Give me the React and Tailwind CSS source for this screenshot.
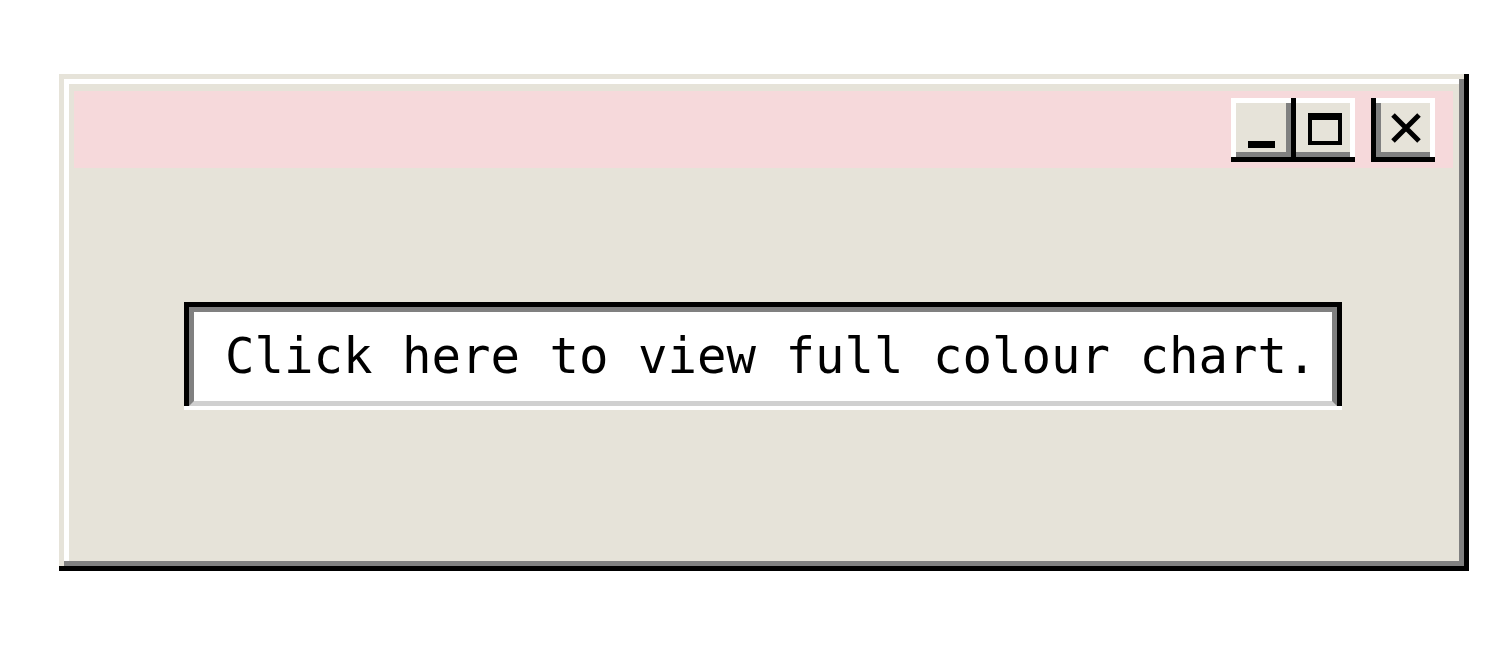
import React from "react";

export default function App() {
  return (
    <div className="min-h-[650px] w-[1500px] bg-white pt-[74px] pl-[59px]">
      {/* window: black(r,b) > beige(t,l) > gray(r,b) > white(t,l) */}
      <div className="w-[1410px] border-r-[5px] border-b-[5px] border-black">
        <div className="border-t-[5px] border-l-[5px] border-[#e6e3d9]">
          <div className="border-r-[5px] border-b-[5px] border-[#808080]">
            <div className="h-[482px] border-t-[5px] border-l-[5px] border-white bg-[#e6e3d9] flex flex-col">
              <div className="flex-1 pt-[7px] pl-[5px] pr-[6px] flex flex-col">
                {/* title bar */}
                <div className="h-[77px] bg-[#f6d9db] flex justify-end items-start pt-[7px] pr-[18px]">
                  {/* minimize */}
                  <div className="border-r-[5px] border-b-[5px] border-black">
                    <div className="border-t-[5px] border-l-[5px] border-white">
                      <div className="w-[55px] h-[54px] border-r-[5px] border-b-[5px] border-[#808080] bg-[#e6e3d9] flex items-end justify-center pb-[4px]">
                        <div className="w-[27px] h-[7px] bg-black" />
                      </div>
                    </div>
                  </div>
                  {/* maximize */}
                  <div className="border-b-[5px] border-black">
                    <div className="border-t-[5px] border-r-[5px] border-white">
                      <div className="w-[54px] h-[54px] border-b-[5px] border-[#808080] bg-[#e6e3d9] pt-[10px] pl-[12px]">
                        <div className="w-[34px] h-[32px] border-t-[7px] border-x-[4px] border-b-[4px] border-black" />
                      </div>
                    </div>
                  </div>
                  <div className="w-[16px]" />
                  {/* close */}
                  <div className="border-l-[5px] border-b-[5px] border-black">
                    <div className="border-t-[5px] border-r-[5px] border-white">
                      <div className="w-[54px] h-[54px] border-l-[5px] border-b-[5px] border-[#808080] bg-[#e6e3d9] flex items-center justify-center">
                        <svg width="30" height="30" viewBox="0 0 30 30">
                          <path d="M2 2 L28 28 M28 2 L2 28" stroke="black" strokeWidth="5" fill="none" />
                        </svg>
                      </div>
                    </div>
                  </div>
                </div>
                {/* text box */}
                <div className="mt-[134px] ml-[110px] w-[1158px] border-b-[4px] border-white">
                  <div className="border-t-[5px] border-x-[5px] border-black">
                    <div className="h-[99px] border-t-[5px] border-x-[5px] border-b-[5px] border-t-[#808080] border-x-[#808080] border-b-[#d0d0d0] bg-white flex items-center pl-[31px]">
                      <span
                        className="text-[49px] text-black whitespace-nowrap leading-none"
                        style={{ fontFamily: '"DejaVu Sans Mono", "Liberation Mono", monospace' }}
                      >
                        Click here to view full colour chart.
                      </span>
                    </div>
                  </div>
                </div>
              </div>
            </div>
          </div>
        </div>
      </div>
    </div>
  );
}
